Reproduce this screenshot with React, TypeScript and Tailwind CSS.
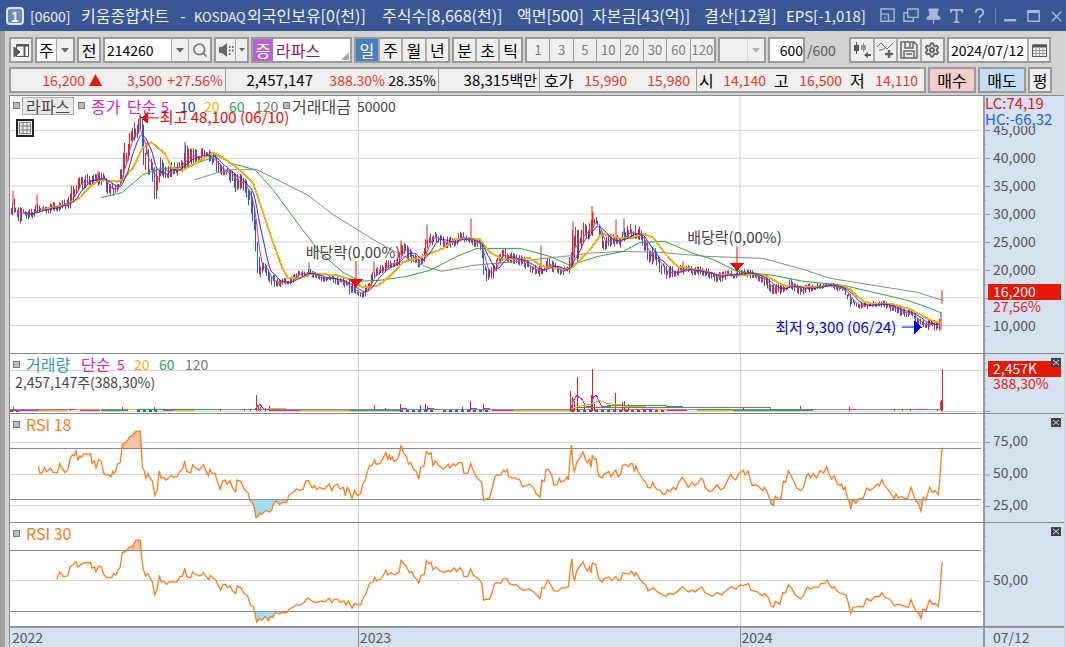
import { useId } from 'react';
import type { ReactNode } from 'react';
import { Search, Settings } from 'lucide-react';

// ── Data ───────────────────────────────────────────────────────────────────

type Point = [number, number];

function parse(points: string, dx = 0): Point[] {
  return points
    .trim()
    .split(/\s+/)
    .map((p) => {
      const [x, y] = p.split(',').map(Number);
      return [x + dx, y];
    });
}

function toPath(points: Point[]): string {
  return 'M' + points.map(([x, y]) => `${x} ${y}`).join('L');
}

// x, high, low of the traded range
const PRICE_BAND = `
10,206,216 13,192,214 15,200,212 19,208,224 24,211,217 30,210,220 37,200,213 41,207,213 46,204,213
52,203,213 58,205,211 62,198,210 66,202,208 70,190,208 75,178,195 78,176,190 84,178,188 90,172,186
94,176,182 98,173,187 104,175,187 108,186,199 113,184,196 118,185,190 121,160,185 124,145,172
128,137,158 132,126,147 137,119,137 140,114,128 143,125,164 146,144,174 150,158,174 153,165,197
155,172,200 158,160,190 160,157,176 166,170,178 172,162,176 178,164,175 182,160,172 185,146,167
190,148,164 196,151,163 201,149,158 206,150,159 211,150,163 215,156,168 220,166,180 224,168,179
230,170,181 234,175,193 238,172,188 243,178,190 246,182,198 250,190,216 253,200,222 255,215,274
258,258,278 261,262,276 266,266,275 270,276,289 276,277,286 281,280,287 288,279,287 296,273,280
300,272,278 309,270,276 312,272,278 320,277,281 330,276,284 335,277,286 341,279,284 346,280,290
351,283,297 356,290,298 361,292,298 365,285,296 368,281,290 372,274,285 375,270,276 384,265,272
388,260,270 392,263,268 398,260,268 400,244,262 405,245,258 411,252,262 418,260,268 423,255,265
427,232,250 431,233,246 437,234,243 442,238,247 448,238,248 454,238,246 460,233,242 464,234,242
470,237,244 475,239,247 480,240,250 483,250,275 485,270,284 489,268,280 493,264,278 498,255,266
504,249,260 508,252,262 515,256,264 522,257,266 530,263,272 538,268,276 542,266,277 547,259,270
553,263,272 560,268,275 568,268,274 571,235,270 574,226,262 577,232,265 580,230,250 583,224,246
587,228,240 592,212,236 595,217,234 598,225,240 602,238,252 608,236,248 614,236,246 620,236,248
624,224,240 628,225,237 633,226,238 638,225,240 642,235,248 646,243,260 650,248,264 655,250,265
660,262,275 665,268,279 672,268,277 680,265,275 686,266,274 693,269,275 700,268,275 706,269,276
712,273,281 720,274,282 728,272,278 736,272,278 740,271,277 748,270,277 755,274,281 760,276,284
766,278,288 772,283,294 780,286,294 786,284,290 790,280,288 795,285,293 801,288,295 808,284,292
815,284,290 822,283,288 830,283,287 838,286,293 846,289,297 850,296,310 855,304,310 862,303,309
870,303,308 882,302,307 890,305,311 900,308,316 910,312,317 917,316,325 921,322,331 928,321,330
935,322,330 940,320,331`
  .trim()
  .split(/\s+/)
  .map((p) => p.split(',').map(Number));

// x, high, low, rising
const SPIKES: [number, number, number, boolean][] = [
  [13, 191, 205, true],
  [37, 195, 208, true],
  [98, 171, 182, true],
  [140, 114, 130, false],
  [185, 142, 160, false],
  [309, 263, 275, false],
  [374, 262, 274, true],
  [427, 225, 245, true],
  [471, 219, 240, true],
  [541, 246, 270, true],
  [573, 222, 265, true],
  [592, 207, 225, true],
  [593, 212, 228, true],
  [616, 220, 240, true],
  [624, 219, 236, false],
  [401, 241, 256, true],
  [683, 262, 270, true],
  [941, 313, 331, true],
  [942, 291, 305, true],
];

const MA20 = parse(`42,210 57,207 68,205 80,198 90,187 100,180 117,182 123,180 133,168 142,149 151,142
165,154 172,168 182,171 193,165 213,153 223,158 237,168 253,183 263,213 272,240 282,268 288,279 300,279
313,274 337,276 350,280 362,288 377,287 390,277 403,263 423,257 443,249 455,240 480,240 490,253 503,260
530,259 542,267 570,270 578,263 590,250 602,234 616,238 630,239 643,234 653,238 665,254 677,267 700,271
720,276 737,276 753,275 767,277 783,286 803,288 830,287 843,287 850,290 863,302 873,305 893,305 910,310
923,317 935,323 942,324`);

const MA60 = parse(`101,198 122,193 143,175 160,169 187,167 217,156 233,164 255,170 273,190 300,227
320,253 343,273 360,282 380,281 407,277 430,271 457,257 477,249 520,249 550,257 570,266 598,257 623,252
640,243 665,242 693,254 713,260 737,272 773,276 803,282 843,286 873,293 907,301 927,308 942,314`);

const MA120 = parse(`195,180 217,173 233,170 257,170 283,183 307,195 333,215 373,240 400,255 427,268
442,272 473,266 507,263 573,256 587,254 620,252 660,253 707,257 763,259 803,270 830,279 873,286 917,293
942,301`);

const RSI18 = [
  ...parse(`115,367 120,388 127,385 133,370 140,383 152,372 158,384 172,386 179,358 184,370 195,385
203,378 210,345 217,332 222,335 228,320 234,347 240,335 245,339 250,330 258,328 263,331 272,328 276,358
283,350 288,372 296,347 303,350 311,387 318,393 324,391 333,398 338,382 342,388 347,382 352,360 361,355
367,300 380,292 388,278 398,272 408,260 421,260 424,315 427,370 433,380 437,402 444,388 450,402 458,412
464,455 471,440 478,380 483,402 492,400 498,408 507,400 515,394 520,400 532,398 538,383 548,375 554,350
560,382 572,386 578,362 588,372 598,378 611,362 617,378 625,395 630,375 637,388 645,388 652,412 661,436
668,410 675,408 681,420 690,410 697,430 707,443 711,408 722,412 730,430 738,442 745,448 750,470 758,478
763,490 768,522 774,518 780,508 785,512 797,500 808,505 815,500 820,482 828,472 838,482 848,476 860,476
866,455 880,445 890,435 900,440 910,435 918,410 925,410 937,432 944,425 950,437 958,430 972,436 988,420
995,440 1003,425 1012,420 1020,435 1030,430 1036,455 1042,430 1048,440 1056,465 1064,440 1072,455
1082,450 1088,420 1095,410 1100,390 1108,365 1115,365 1124,347 1128,360 1140,358 1150,340 1158,325
1163,345 1168,333 1172,345 1177,338 1182,352 1192,345 1198,330 1203,302 1210,325 1218,335 1226,360
1232,355 1240,375 1248,380 1256,405 1262,370 1272,365 1279,322 1286,330 1293,325 1299,365 1306,350
1318,365 1330,375 1345,360 1350,372 1360,358 1366,365 1376,355 1386,355 1392,388 1403,388 1412,358
1420,380 1430,400 1438,408 1445,415 1451,470 1457,465 1468,462 1476,435 1484,400`),
  ...parse(`48,393 62,393 70,378 76,384 82,376 86,398 98,402 104,400 110,405 118,405 128,428 140,425
148,420 160,430 168,448 180,460 186,408 193,412 198,377 205,375 215,393 222,425 232,420 238,403 243,415
255,408 262,398 265,408 270,345 275,302 278,355 283,385 290,355 300,340 309,323 316,345 322,355 329,345
333,370 337,335 345,345 349,345 353,380 357,395 366,402 372,390 387,382 393,398 400,388 407,378 415,398
422,390 427,365 435,360 446,368 452,358 458,358 463,382 468,365 473,380 482,395 490,408 496,412 503,430
512,432 518,415 525,430 533,437 540,438 548,450 556,452 563,437 570,443 580,430 588,438 597,415 607,400
615,412 625,430 637,415 645,425 655,415 663,402 670,408 675,430 687,442 697,440 711,422 722,438 732,432
742,410 752,390 757,400 767,408 775,390 782,385 790,378 795,393 805,380 810,405 817,425 828,422 838,430
848,440 853,430 862,445 868,462 873,480 880,485`, 1440),
  ...parse(`46,457 55,465 63,465 70,412 77,415 85,380 92,392 100,408 110,432 122,440 130,430 140,395
145,388 152,402 160,388 170,402 180,380 190,387 200,368 206,388 215,405 223,395 232,420 240,425 245,420
250,437 255,430 262,460 268,475 272,497 278,468 288,478 297,465 310,463 320,432 330,440 340,432 352,420
358,425 366,407 372,422 380,430 390,445 403,465 408,450 415,462 425,458 432,463 443,465 453,430 460,450
466,470 475,480 483,502 490,460 497,470 503,450 509,430 517,445 525,440 535,452 540,400 544,335
547,310`, 2280),
];

const RSI30 = [
  ...parse(`170,705 179,683 190,697 203,695 210,668 220,660 228,652 234,668 247,657 258,655 272,655
276,672 283,668 288,682 296,665 304,668 311,690 320,700 335,700 341,688 348,692 355,675 360,670 367,625
378,620 388,608 398,605 408,587 421,587 425,640 430,675 437,695 443,688 450,700 458,715 464,752 471,735
478,693 483,712 492,712 500,720 507,713 518,712 530,714 540,697 548,695 554,672 560,697 572,700 578,683
590,692 600,695 611,685 617,695 626,706 632,693 640,702 648,708 655,725 662,738 668,722 676,720 682,730
690,725 698,740 707,748 712,725 722,730 732,748 743,755 752,785 760,787 766,815 770,834 778,825 786,828
795,818 800,822 806,830 810,818 818,820 826,806 838,810 848,805 860,806 866,797 880,788 890,782 900,783
912,775 922,762 930,766 940,773 950,775 965,770 975,773 988,762 995,775 1003,765 1012,765 1020,775
1032,770 1038,782 1045,770 1056,792 1064,778 1074,783 1082,782 1090,760 1098,748 1108,718 1120,712
1124,700 1130,710 1142,705 1150,692 1158,678 1164,692 1172,685 1185,692 1197,683 1203,648 1210,655
1220,668 1228,685 1235,682 1243,698 1250,705 1256,717 1262,695 1273,690 1279,648 1286,658 1293,654
1299,677 1308,668 1320,680 1332,684 1345,678 1352,682 1362,670 1370,682 1380,670 1388,680 1392,697
1403,697 1412,673 1420,693 1432,700 1445,715 1451,768 1460,765 1468,766 1476,745 1484,718`),
  ...parse(`48,715 62,717 70,704 82,704 88,718 100,722 110,722 128,738 148,735 160,742 170,752 180,763
186,730 193,732 203,707 212,722 222,740 235,740 243,732 255,730 266,727 270,680 276,643 279,695 284,708
290,680 300,665 309,652 316,670 322,680 328,668 333,685 337,655 348,662 353,690 358,705 366,713 372,703
387,698 395,710 407,697 415,708 422,707 428,685 446,690 455,680 463,695 468,685 480,705 490,717 498,722
504,740 520,730 532,743 545,750 558,757 565,748 580,750 595,740 607,727 625,743 637,737 645,743 665,728
675,745 697,756 711,745 725,752 740,738 754,727 768,735 780,722 790,724 805,718 813,738 830,742 848,755
854,748 866,762 873,785`, 1440),
  ...parse(`40,789 46,772 60,780 68,745 77,745 85,722 95,732 105,752 122,764 130,755 142,728 152,735
162,728 175,730 182,718 192,718 202,708 208,722 217,732 223,727 233,742 247,750 258,752 266,780 272,808
279,790 295,787 310,788 320,763 332,770 345,757 358,757 366,745 375,760 390,765 403,785 415,780 440,788
445,790 453,766 462,790 470,803 476,808 483,823 489,795 498,800 509,767 517,780 526,778 535,787 540,745
544,675 547,653`, 2280),
];

function buildCandles() {
  let seed = 7;
  const rand = () => {
    seed = (seed * 1103515245 + 12345) % 2147483648;
    return seed / 2147483648;
  };
  let up = '';
  let down = '';
  const closes: Point[] = [];
  let k = 0;
  let prev = 211;
  for (let i = 0; i < 596; i++) {
    const x = 10.5 + i * 1.56;
    while (k < PRICE_BAND.length - 2 && PRICE_BAND[k + 1][0] < x) k++;
    const [x0, h0, l0] = PRICE_BAND[k];
    const [x1, h1, l1] = PRICE_BAND[k + 1];
    const t = Math.min(1, Math.max(0, (x - x0) / (x1 - x0)));
    const high = h0 + (h1 - h0) * t;
    const low = l0 + (l1 - l0) * t;
    const range = low - high;
    const close = high + range * (0.1 + rand() * 0.8);
    const top = Math.max(high - 1, Math.min(prev, close) - range * 0.6 * rand());
    const bottom = Math.min(low + 1, Math.max(prev, close) + range * 0.6 * rand());
    const seg = `M${Math.round(x) + 0.5} ${top.toFixed(1)}V${Math.max(bottom, top + 3).toFixed(1)}`;
    if (close <= prev) up += seg;
    else down += seg;
    closes.push([x, close]);
    prev = close;
  }
  return { up, down, closes };
}

function movingAverage(points: Point[], size: number): Point[] {
  const out: Point[] = [];
  for (let i = size - 1; i < points.length; i++) {
    let sum = 0;
    for (let j = 0; j < size; j++) sum += points[i - j][1];
    out.push([points[i][0], sum / size]);
  }
  return out;
}

const { up: CANDLES_UP, down: CANDLES_DOWN, closes: CLOSES } = buildCandles();
const MA5 = movingAverage(CLOSES, 5);
const MA10 = movingAverage(CLOSES, 10);

// ── Title bar ──────────────────────────────────────────────────────────────

function TitleBar() {
  return (
    <header className="flex h-[31px] items-center bg-[#3a5793] pl-1.5 pr-px text-[#eef2fa]">
      <span className="mr-1.5 grid size-[18px] shrink-0 place-items-center rounded border-2 border-[#dfe6f3] bg-[#6f88bb] text-sm font-bold leading-none">
        1
      </span>
      <h1 className="flex min-w-0 flex-1 items-baseline whitespace-pre">
        <span className="w-[51px] shrink-0 text-sm">[0600]</span>
        <span className="w-[99px] shrink-0">키움종합차트</span>
        <span className="w-[14px] shrink-0">-</span>
        <span className="w-[53px] shrink-0 text-[13px]">KOSDAQ</span>
        <span className="w-[135px] shrink-0">외국인보유[0(천)]</span>
        <span className="w-[135px] shrink-0">주식수[8,668(천)]</span>
        <span className="w-[75px] shrink-0">액면[500]</span>
        <span className="w-[112px] shrink-0">자본금[43(억)]</span>
        <span className="w-[82px] shrink-0">결산[12월]</span>
        <span className="shrink-0 text-[15px]">EPS[-1,018]</span>
      </h1>
      <div className="flex shrink-0 items-center gap-[7px] text-[#a9b7d6]">
        <TitleButton label="화면 분리">
          <path d="M1 1h14v13H1zM1 6.500h8V14M4 10.500h2.500" />
        </TitleButton>
        <TitleButton label="화면 복사">
          <path d="M5 1h11v9H5zM5 5H1v9h10v-4" />
        </TitleButton>
        <TitleButton label="고정">
          <path d="M3 1h10v2h-1v5l3 2v2H1v-2l3-2V3H3zM8 11v6" fill="currentColor" strokeWidth="1" />
        </TitleButton>
        <TitleButton label="글꼴">
          <path d="M2 5V2h12v3M8 2v13M5 15h6" strokeWidth="2" />
        </TitleButton>
        <TitleButton label="도움말">
          <path d="M4 5c0-5 8-5 8 0 0 3-4 3-4 6M8 13v3" strokeWidth="2" />
        </TitleButton>
        <span className="h-4 w-px bg-[#6980b0]" />
        <TitleButton label="최소화">
          <path d="M1 13h13" strokeWidth="2.500" />
        </TitleButton>
        <TitleButton label="최대화">
          <path d="M2 3h12v11H2zM2 4.500h12" />
        </TitleButton>
        <TitleButton label="닫기">
          <path d="M3 4l10 10M13 4L3 14" />
        </TitleButton>
      </div>
    </header>
  );
}

function TitleButton({ label, children }: { label: string; children: ReactNode }) {
  return (
    <button type="button" aria-label={label}>
      <svg viewBox="0 0 17 17" className="size-4" fill="none" stroke="currentColor" strokeWidth="1.500">
        {children}
      </svg>
    </button>
  );
}

// ── Toolbar ────────────────────────────────────────────────────────────────

const BOX = 'h-[26px] shrink-0 border-2 border-[#999]';

function Toolbar() {
  return (
    <div className="flex items-center gap-0.5 whitespace-nowrap text-black">
      <button type="button" aria-label="메뉴" className={`${BOX} grid w-6 place-items-center bg-[#efefef]`}>
        <svg viewBox="0 0 16 16" className="size-4" fill="none" stroke="#555">
          <path d="M3.500 2.500h12v12h-12z" fill="#fff" />
          <path d="M3 3.500h13M11.500 4v10" strokeWidth="2" />
          <path d="M1 5l6 5-6 5z" fill="#555" />
        </svg>
      </button>

      <label className={`${BOX} relative w-10 bg-white`}>
        <select aria-label="종류" defaultValue="주" className="h-full w-full appearance-none pl-0.5">
          <option>주</option>
        </select>
        <Arrow className="pointer-events-none absolute inset-y-0 right-0 w-[17px]" />
      </label>

      <button type="button" className={`${BOX} w-6 bg-[#efefef]`}>전</button>

      <div className={`${BOX} flex w-[109px] bg-[#efefef]`}>
        <input aria-label="종목코드" defaultValue="214260" className="w-[66px] bg-white pl-0.5 text-sm" />
        <button type="button" aria-label="최근 종목"><Arrow className="h-full w-[17px]" /></button>
        <button type="button" aria-label="검색" className="grid flex-1 place-items-center border-l border-[#aaa]">
          <Search className="size-4 text-[#777]" strokeWidth={2.5} />
        </button>
      </div>

      <div className={`${BOX} flex w-[35px] bg-[#efefef]`}>
        <button type="button" aria-label="소리" className="grid flex-1 place-items-center">
          <svg viewBox="0 0 16 16" className="size-4" fill="#666">
            <path d="M1 5h3l5-4v14l-5-4H1zM11 4h1.500v2H11zM14 4h1.500v2H14zM11 7.500h1.500v2H11zM14 7.500h1.500v2H14zM11 11h1.500v2H11z" />
          </svg>
        </button>
        <button type="button" aria-label="소리 설정"><Arrow className="h-full w-3" small /></button>
      </div>

      <div className={`${BOX} relative flex w-[101px] bg-white`}>
        <span className="grid w-5 place-items-center bg-[#b565cf] text-white">증</span>
        <input aria-label="종목명" defaultValue="라파스" className="w-[70px] bg-white pl-[3px] text-[#8c1a5c]" />
        <svg viewBox="0 0 8 8" className="absolute bottom-px right-px size-2" fill="#aaa">
          <path d="M8 0v8H0z" />
        </svg>
      </div>

      <div className={`${BOX} flex w-24 divide-x-2 divide-[#aaa] bg-[#efefef]`}>
        <button type="button" className="flex-1 bg-[#477fc4] text-white">일</button>
        <button type="button" className="flex-1">주</button>
        <button type="button" className="flex-1">월</button>
        <button type="button" className="flex-1">년</button>
      </div>
      <div className={`${BOX} flex w-[71px] divide-x-2 divide-[#aaa] bg-[#efefef]`}>
        <button type="button" className="flex-1">분</button>
        <button type="button" className="flex-1">초</button>
        <button type="button" className="flex-1">틱</button>
      </div>
      <div className={`${BOX} grid w-[191px] grid-cols-8 divide-x divide-[#999] bg-[#efefef] text-[13px] text-[#7a7a7a]`}>
        {[1, 3, 5, 10, 20, 30, 60, 120].map((n) => (
          <button key={n} type="button">{n}</button>
        ))}
      </div>

      <label className={`${BOX} relative w-12 bg-[#efefef]`}>
        <select aria-label="틱 단위" disabled className="h-full w-full appearance-none" />
        <Arrow className="pointer-events-none absolute inset-y-0 right-0 w-[17px] opacity-40" />
      </label>

      <input aria-label="조회 개수" defaultValue="600" className={`${BOX} w-[37px] bg-white text-right text-sm`} />
      <span className="w-10 shrink-0 text-sm text-[#555]">/600</span>

      <div className={`${BOX} flex w-24 divide-x-2 divide-[#aaa] bg-[#efefef] text-[#666]`}>
        <button type="button" aria-label="차트 추가" className="grid flex-1 place-items-center">
          <svg viewBox="0 0 18 18" className="size-[18px]" fill="#555">
            <path d="M1 4h5v6H1zM3 1h1v12H3z" />
            <path d="M8 4h5v5H8zM10 2h1v9h-1z" fill="#999" />
            <path d="M11 14l4-3v2h3v2h-3v2z" />
          </svg>
        </button>
        <button type="button" aria-label="지표 추가" className="grid flex-1 place-items-center">
          <svg viewBox="0 0 18 18" className="size-[18px]" fill="none" stroke="#666">
            <path d="M1 6l4-4 6 6 6-6M3 9h3l4-3" />
            <path d="M13 9v8M9 13h8" strokeWidth="2.500" />
          </svg>
        </button>
        <button type="button" aria-label="저장" className="grid flex-1 place-items-center">
          <svg viewBox="0 0 18 18" className="size-[18px]" fill="none" stroke="#666" strokeWidth="1.500">
            <path d="M1 1h13l3 3v13H1zM5 1v6h8V1M10 2v4M4 17v-7h10v7M6 13h6" />
          </svg>
        </button>
        <button type="button" aria-label="설정" className="grid flex-1 place-items-center">
          <Settings className="size-4" strokeWidth={3} />
        </button>
      </div>

      <div className={`${BOX} flex w-[104px] bg-[#efefef]`}>
        <input aria-label="기준일" defaultValue="2024/07/12" className="w-[78px] bg-white pl-0.5 text-sm" />
        <button type="button" aria-label="달력" className="grid flex-1 place-items-center border-l-2 border-[#aaa]">
          <svg viewBox="0 0 15 14" className="h-3.5 w-[15px]" fill="none" stroke="#555">
            <path d="M.5 1.500h14v12H.5zM.5 7.500h14M.5 10.500h14M4 5v8M7.500 5v8M11 5v8" stroke="#999" />
            <path d="M.5 3h14" strokeWidth="3" />
            <path d="M.5 3v10.500h14V3" />
          </svg>
        </button>
      </div>
    </div>
  );
}

function Arrow({ className, small }: { className: string; small?: boolean }) {
  return (
    <span className={`${className} grid place-items-center border-l border-[#aaa] bg-[#efefef]`}>
      <svg viewBox="0 0 10 6" className={small ? 'w-1.5' : 'w-2'} fill="#666">
        <path d="M0 0h10L5 6z" />
      </svg>
    </span>
  );
}

// ── Quote row ──────────────────────────────────────────────────────────────

function QuoteRow() {
  return (
    <div className="flex gap-0.5 whitespace-nowrap">
      <dl className={`${BOX} flex w-[917px] items-center bg-[#efefef] text-sm leading-[22px] text-[#ee3524]`}>
        <dd className="w-[74px] text-right">16,200</dd>
        <dd className="w-[19px] pl-1">
          <svg viewBox="0 0 13 12" className="h-3 w-[13px]" fill="#e81808">
            <path d="M6.500 0L13 12H0z" />
          </svg>
        </dd>
        <dd className="w-[58px] text-right">3,500</dd>
        <dd className="w-[63px] pr-0.5 text-right">+27.56%</dd>
        <dd className="w-[88px] border-l border-[#999] text-right text-[15px] text-black">2,457,147</dd>
        <dd className="w-[72px] text-right">388.30%</dd>
        <dd className="w-[53px] pr-0.5 text-right text-black">28.35%</dd>
        <dd className="w-[101px] border-l border-[#999] pr-0.5 text-right text-[15px] text-black">38,315백만</dd>
        <dt className="w-9 border-l border-[#999] pl-1 text-base text-black">호가</dt>
        <dd className="w-[52px] text-right">15,990</dd>
        <dd className="w-[63px] text-right">15,980</dd>
        <dd className="w-[6px]" />
        <dt className="w-[17px] border-l border-[#999] pl-0.5 text-base text-black">시</dt>
        <dd className="w-[53px] text-right">14,140</dd>
        <dt className="w-6 pl-2 text-base text-black">고</dt>
        <dd className="w-[52px] text-right">16,500</dd>
        <dt className="w-6 pl-2 text-base text-black">저</dt>
        <dd className="w-[52px] text-right">14,110</dd>
      </dl>
      <button type="button" className={`${BOX} w-12 bg-[#f3cdc9] text-black`}>매수</button>
      <button type="button" className={`${BOX} w-12 bg-[#c2dcf2] text-black`}>매도</button>
      <button type="button" className={`${BOX} w-6 bg-[#efefef] text-black`}>평</button>
    </div>
  );
}

// ── Chart ──────────────────────────────────────────────────────────────────

function Panel({
  height,
  plotBox,
  axisBox,
  plot,
  axis,
  children,
}: {
  height: string;
  plotBox: string;
  axisBox: string;
  plot: ReactNode;
  axis: ReactNode;
  children: ReactNode;
}) {
  return (
    <section className={`${height} flex border-b border-[#888]`}>
      <div className="relative min-w-0 flex-1">
        <svg viewBox={plotBox} preserveAspectRatio="none" fill="none" className="absolute inset-0 h-full w-full [&_path]:[vector-effect:non-scaling-stroke]">
          {plot}
        </svg>
        {children}
      </div>
      <svg viewBox={axisBox} fill="#555" className="h-full w-[81px] shrink-0 border-l-2 border-[#999] bg-[#d5e1ef] text-sm">
        {axis}
      </svg>
    </section>
  );
}

function Marker() {
  return <span className="mr-1.5 size-[7px] shrink-0 border border-[#777] bg-[#bbb]" />;
}

function CloseMark() {
  return (
    <g>
      <rect x="1051" y="4" width="10" height="9" fill="#444" />
      <path d="M1053 6l6 5M1059 6l-6 5" stroke="#ddd" />
    </g>
  );
}

const PRICE_LINES = [131, 159, 187, 215, 243, 271, 299, 327];

function PricePanel() {
  return (
    <Panel
      height="h-[258px]"
      plotBox="10 96 973 258"
      axisBox="985 96 79 257"
      plot={
        <g shapeRendering="crispEdges">
          <path d={PRICE_LINES.map((y) => `M10 ${y - 0.5}H981`).join('')} stroke="#d6d6d6" />
          <path d="M358.500 96V354M740 96V354" stroke="#d0d0d0" />
          <path d={CANDLES_UP} stroke="#e8200f" />
          <path d={CANDLES_DOWN} stroke="#1c62d4" />
          {SPIKES.map(([x, top, bottom, rising], i) => (
            <path key={i} d={`M${x} ${top}V${bottom}`} stroke={rising ? '#e8200f' : '#1c62d4'} />
          ))}
          <path d={toPath(MA120)} stroke="#8a8a8a" />
          <path d={toPath(MA60)} stroke="#28a745" />
          <path d={toPath(MA20)} stroke="#f0b010" strokeWidth="2" />
          <path d={toPath(MA5)} stroke="#e020c0" />
          <path d={toPath(MA10)} stroke="#1c38b0" />
          <path d="M148 118H159M356 262V282M737 247V266" stroke="#ff0000" />
          <path d="M141 118l7-6v12zM349 280h14l-7 8zM730 264h14l-7 8z" fill="#ff0000" />
          <path d="M902 328H914" stroke="#0000ff" />
          <path d="M914 321v14l8-7z" fill="#0000ff" />
        </g>
      }
      axis={
        <>
          <path
            d={PRICE_LINES.map((y) => `M985 ${y - 0.5}h5M985 ${y + 13.5}h1`).join('')}
            stroke="#999"
          />
          {['45,000', '40,000', '35,000', '30,000', '25,000', '20,000'].map((label, i) => (
            <text key={label} x="993" y={135 + i * 28}>{label}</text>
          ))}
          <text x="993" y="331">10,000</text>
          <path d="M985 97h76v29h-76z" fill="#d5e1ef" />
          <text x="985" y="109" fill="#e01818" className="text-[15px]">LC:74,19</text>
          <text x="985" y="125" fill="#1c62d4" className="text-[15px]">HC:-66,32</text>
          <path d="M988 284h73v16h-73z" fill="#e81808" />
          <text x="993" y="297" fill="#fff">16,200</text>
          <text x="993" y="312" fill="#e01818">27,56%</text>
        </>
      }
    >
      <div className="relative flex h-[19px] items-center whitespace-nowrap pl-[3px] text-sm">
        <span className="mr-0.5 size-[7px] border border-[#777] bg-[#bbb]" />
        <span className="mr-1 w-[52px] border border-[#aaa] bg-[#eaeaea] text-center text-base leading-4 text-[#444]">라파스</span>
        <Marker />
        <span className="w-9 text-base text-[#e020b8]">종가</span>
        <span className="w-[34px] text-base text-[#e020b8]">단순</span>
        <span className="w-[19px] text-[#e020b8]">5</span>
        <span className="w-6 text-[#1c38b0]">10</span>
        <span className="w-[25px] text-[#f0b010]">20</span>
        <span className="w-[26px] text-[#28a745]">60</span>
        <span className="w-7 text-[#777]">120</span>
        <span className="size-[7px] border border-[#777] bg-[#bbb]" />
        <span className="w-[67px] pl-0.5 text-base text-[#444]">거래대금</span>
        <span className="text-[#444]">50000</span>
      </div>
      <button type="button" aria-label="표 보기" className="relative ml-1.5 mt-1 grid size-[18px] place-items-center border-2 border-[#222] bg-[#eee]">
        <svg viewBox="0 0 12 12" className="size-3" fill="none" stroke="#777">
          <path d="M.5.500h11v11H.5zM.5 4h11M.5 8h11M4 0v12M8 0v12" />
        </svg>
      </button>
      <p className="absolute left-[15.400%] top-[11px] text-[15px] text-[#ff0000]">최고 48,100 (06/10)</p>
      <p className="absolute left-[30.400%] top-[146px] text-[15px] text-[#444]">배당락(0,00%)</p>
      <p className="absolute left-[69.600%] top-[131px] text-[15px] text-[#444]">배당락(0,00%)</p>
      <p className="absolute right-[8.900%] top-[221px] text-[15px] text-[#0000ff]">최저 9,300 (06/24)</p>
    </Panel>
  );
}

// x and top of each volume bar, in thirds of a pixel
const VOLUME_BARS = parse(`40,190 66,195 111,195 179,195 188,196 210,196 367,190 463,190 662,195 734,195
752,195 768,153 774,186 782,190 795,194 808,187 1124,183 1157,192 1202,180 1262,183 1277,180 1283,188
1388,190 1412,172 1451,180 1712,142 1718,158 1724,170 1731,97 1752,180 1773,153 1776,75 1782,180
1847,146 1868,175 1873,172 1885,182 2230,194 2402,187 2548,190 2683,195 2707,195 2732,195 2812,195
2823,168 2826,75`);

function VolumePanel() {
  return (
    <Panel
      height="h-[60px]"
      plotBox="30 28 2919 180"
      axisBox="985 0 79 59"
      plot={
        <g shapeRendering="crispEdges">
          <path d="M30 77H2943M30 203H2943" stroke="#d6d6d6" />
          <path d="M1075 28V208M2220 28V208" stroke="#d0d0d0" />
          <path d="M30 198H2826" stroke="#8a8a8a" />
          <path d={VOLUME_BARS.map(([x, y]) => `M${x} ${y}V202`).join('')} stroke="#e8200f" />
          <path d="M1712 201H2000M1200 201H1300M1330 201H1470M410 201H470M30 201H60" stroke="#1c62d4" strokeWidth="2" strokeDasharray="3 3" />
          <path d="M1715 201H2000" stroke="#e8200f" strokeWidth="2" strokeDasharray="2 4" />
          <path d="M42 199H115M205 197H225M240 201H300M490 201H520M765 198L770 188 780 182 792 196H806M810 201H900M1200 193H1222M1280 193H1302M1412 194H1432M1450 193H1470M1475 201H1540M1712 195L1720 170 1730 155 1748 168 1756 186 1775 190 1780 158 1790 155 1798 175 1806 188 1850 184 1880 186M1925 196H1965M2000 201H2060M2548 197H2568M2746 197H2780M2822 196V170" stroke="#e020c0" />
          <path d="M115 201H200M225 197H304M385 197H410M520 201H585M805 193H858M900 201H1050M1540 201H1710M1712 196L1735 188 1775 180 1800 170 1825 180 1860 182 1880 189H1938M1960 197H2000M2090 200H2200" stroke="#f0b010" />
          <path d="M304 201H385M410 197H645M1050 201H1200M1735 192L1810 190 1845 185H2000V189H2050M2090 197H2195M2200 201H2440" stroke="#28a745" />
          <path d="M1775 192H2310V197H2440" stroke="#777" />
        </g>
      }
      axis={
        <>
          <path d="M985 1h1M985 9h1M985 16h5M985 27h1M985 35h1M985 42h1M985 50h1M985 57.500h5" stroke="#999" />
          <path d="M988 7h73v16h-73z" fill="#e81808" />
          <text x="993" y="20" fill="#fff">2,457K</text>
          <text x="993" y="35" fill="#e01818">388,30%</text>
          <CloseMark />
        </>
      }
    >
      <div className="relative flex h-5 items-center pl-[3px] text-sm">
        <Marker />
        <span className="w-[55px] text-base text-[#3a9a9a]">거래량</span>
        <span className="w-9 text-base text-[#e020b8]">단순</span>
        <span className="w-[17px] text-[#e020b8]">5</span>
        <span className="w-[25px] text-[#f0b010]">20</span>
        <span className="w-[26px] text-[#28a745]">60</span>
        <span className="text-[#777]">120</span>
      </div>
      <p className="relative pl-[5px] text-sm leading-4 text-[#444]">2,457,147주(388,30%)</p>
    </Panel>
  );
}

function RsiPanel({
  label,
  points,
  height,
  top,
  bottom,
  overbought,
  oversold,
  gridLines,
  axis,
  axisBox,
}: {
  label: string;
  points: Point[];
  height: string;
  top: number;
  bottom: number;
  overbought: number;
  oversold: number;
  gridLines: number[];
  axis: ReactNode;
  axisBox: string;
}) {
  const id = useId();
  const line = toPath(points);
  const first = points[0][0];
  const last = points[points.length - 1][0];
  return (
    <Panel
      height={height}
      plotBox={`30 ${top} 2919 ${bottom - top}`}
      axisBox={axisBox}
      plot={
        <g>
          <clipPath id={`${id}over`}>
            <rect x="30" y={top} width="2919" height={overbought - top} />
          </clipPath>
          <clipPath id={`${id}under`}>
            <rect x="30" y={oversold} width="2919" height={bottom - oversold} />
          </clipPath>
          <g shapeRendering="crispEdges">
            <path d={gridLines.map((y) => `M30 ${y}H2943`).join('')} stroke="#d6d6d6" />
            <path d={`M1075 ${top}V${bottom}M2220 ${top}V${bottom}`} stroke="#d0d0d0" />
          </g>
          <path d={`${line}V${overbought}H${first}Z`} fill="#f5c2a4" clipPath={`url(#${id}over)`} />
          <path d={`${line}L${last} ${oversold}H${first}Z`} fill="#a0dcf2" clipPath={`url(#${id}under)`} />
          <path d={`M30 ${overbought}H2943M30 ${oversold}H2943`} stroke="#888" shapeRendering="crispEdges" />
          <path d={line} stroke="#ff7a1a" strokeWidth="1.300" />
        </g>
      }
      axis={
        <>
          {axis}
          <CloseMark />
        </>
      }
    >
      <div className="relative flex h-5 items-center pl-[3px] text-[#ff7a1a]">
        <Marker />
        <span>{label}</span>
      </div>
    </Panel>
  );
}

function DateAxis() {
  return (
    <div className="flex h-5 border-t border-[#999] bg-[#d5e1ef] text-sm leading-[18px] text-[#555]">
      <span className="flex-[348] pl-0.5">2022</span>
      <span className="flex-[382] border-l border-[#888] pl-px">2023</span>
      <span className="flex-[243] border-l border-[#888] pl-px">2024</span>
      <span className="w-[81px] border-l-2 border-[#999] pl-2">07/12</span>
    </div>
  );
}

export default function App() {
  return (
    <main className="overflow-hidden bg-[#d2d2d2] font-['Noto_Sans_CJK_KR',sans-serif] text-base leading-5 text-[#222]">
      <TitleBar />
      <div className="border-l-[5px] border-[#a0a0a0] pl-1 pr-0.5">
        <div className="flex flex-col gap-1 pb-0.5 pt-1.5">
          <Toolbar />
          <QuoteRow />
        </div>
        <div className="border-l border-t border-[#888] bg-white">
          <PricePanel />
          <VolumePanel />
          <RsiPanel
            label="RSI 18"
            points={RSI18}
            height="h-[109px]"
            top={208}
            bottom={535}
            overbought={313}
            oversold={466}
            gridLines={[294, 391, 485]}
            axisBox="985 0 79 108"
            axis={
              <>
                <path d="M985 28.500h5M985 61h5M985 92.500h5M985 3h1M985 10h1M985 16h1M985 22h1M985 35h1M985 42h1M985 48h1M985 54h1M985 67h1M985 74h1M985 80h1M985 86h1" stroke="#999" />
                <text x="993" y="32">75,00</text>
                <text x="993" y="64">50,00</text>
                <text x="993" y="96">25,00</text>
              </>
            }
          />
          <RsiPanel
            label="RSI 30"
            points={RSI30}
            height="h-[104px]"
            top={535}
            bottom={846}
            overbought={617}
            oversold={803}
            gridLines={[710]}
            axisBox="985 0 79 103"
            axis={
              <>
                <path d="M985 13.500h1M985 28.500h1M985 43.500h1M985 58.500h5" stroke="#999" />
                <text x="993" y="62">50,00</text>
              </>
            }
          />
          <DateAxis />
        </div>
      </div>
    </main>
  );
}
